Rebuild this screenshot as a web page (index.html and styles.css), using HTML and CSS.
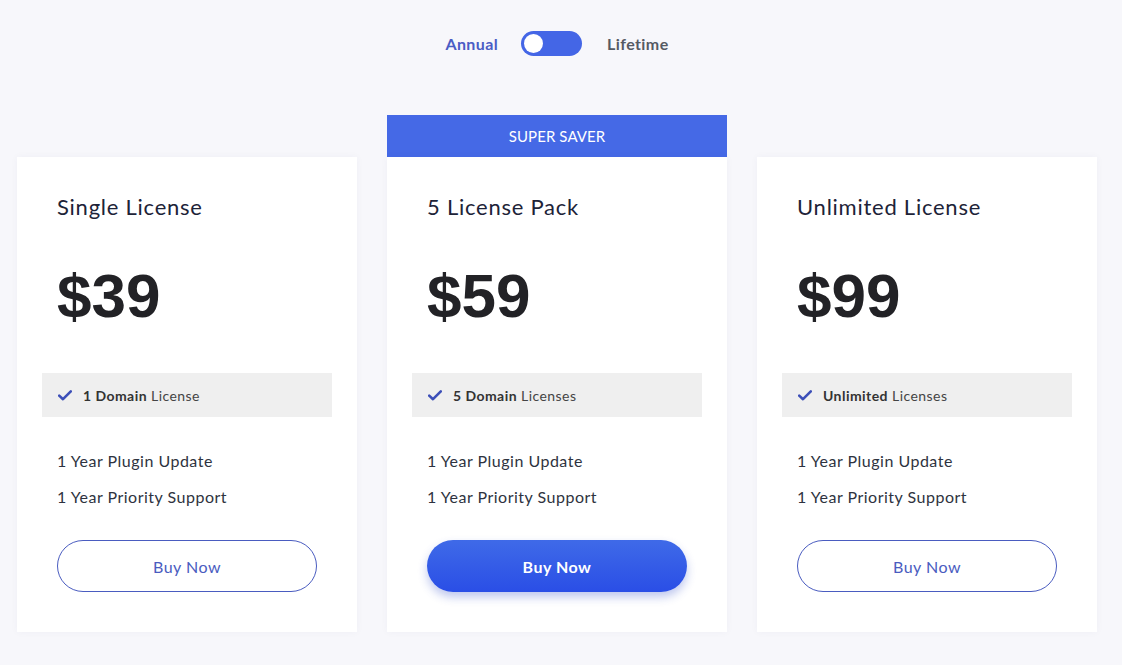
FILE: index.html
```html
<!DOCTYPE html>
<html lang="en">
<head>
<meta charset="utf-8">
<title>Pricing</title>
<link rel="stylesheet" href="styles.css">
</head>
<body>
<div class="page">
  <div class="switcher">
    <span class="sw-label sw-active">Annual</span>
    <span class="toggle"><span class="knob"></span></span>
    <span class="sw-label">Lifetime</span>
  </div>
  <div class="plans">
    <div class="plan-col">
      <div class="card">
        <h2 class="title">Single License</h2>
        <div class="price">$39</div>
        <div class="highlight">
          <svg class="check" viewBox="0 0 14 11" width="14" height="11"><path d="M1.2 5.6 L5 9.2 L12.8 1.4" fill="none" stroke="#3c4fb8" stroke-width="2.6" stroke-linecap="round" stroke-linejoin="round"/></svg>
          <span><b>1 Domain</b> License</span>
        </div>
        <ul class="features">
          <li>1 Year Plugin Update</li>
          <li>1 Year Priority Support</li>
        </ul>
        <a class="btn btn-outline" href="#">Buy Now</a>
      </div>
    </div>
    <div class="plan-col">
      <div class="banner">SUPER SAVER</div>
      <div class="card">
        <h2 class="title">5 License Pack</h2>
        <div class="price">$59</div>
        <div class="highlight">
          <svg class="check" viewBox="0 0 14 11" width="14" height="11"><path d="M1.2 5.6 L5 9.2 L12.8 1.4" fill="none" stroke="#3c4fb8" stroke-width="2.6" stroke-linecap="round" stroke-linejoin="round"/></svg>
          <span><b>5 Domain</b> Licenses</span>
        </div>
        <ul class="features">
          <li>1 Year Plugin Update</li>
          <li>1 Year Priority Support</li>
        </ul>
        <a class="btn btn-solid" href="#">Buy Now</a>
      </div>
    </div>
    <div class="plan-col">
      <div class="card">
        <h2 class="title">Unlimited License</h2>
        <div class="price">$99</div>
        <div class="highlight">
          <svg class="check" viewBox="0 0 14 11" width="14" height="11"><path d="M1.2 5.6 L5 9.2 L12.8 1.4" fill="none" stroke="#3c4fb8" stroke-width="2.6" stroke-linecap="round" stroke-linejoin="round"/></svg>
          <span><b>Unlimited</b> Licenses</span>
        </div>
        <ul class="features">
          <li>1 Year Plugin Update</li>
          <li>1 Year Priority Support</li>
        </ul>
        <a class="btn btn-outline" href="#">Buy Now</a>
      </div>
    </div>
  </div>
</div>
</body>
</html>
```
FILE: styles.css
```css
* { box-sizing: border-box; }
html, body { margin: 0; padding: 0; }
body {
  background: #f7f7fb;
  font-family: "Lato", "Open Sans", sans-serif;
  color: #2b2f3a;
  width: 1122px;
  height: 665px;
  overflow: hidden;
}
.page { padding: 31px 25px 0 17px; }
.switcher {
  display: flex;
  align-items: center;
  justify-content: center;
  height: 25px;
  margin-bottom: 59px;
}
.sw-label {
  font-size: 16px;
  font-weight: 700;
  letter-spacing: 0.4px;
  color: #555a63;
}
.sw-active { color: #4a5cc5; }
.toggle {
  width: 61px;
  height: 25px;
  border-radius: 13px;
  background: #4466e6;
  margin: 0 25px 0 23px;
  padding: 3px;
  display: flex;
}
.knob {
  width: 19px;
  height: 19px;
  border-radius: 50%;
  background: #fff;
}
.plans {
  display: flex;
  align-items: flex-end;
  gap: 30px;
}
.plan-col { width: 340px; display: flex; flex-direction: column; }
.banner {
  height: 42px;
  background: #4569e6;
  color: #fff;
  font-size: 15px;
  display: flex;
  align-items: center;
  justify-content: center;
  letter-spacing: 0.1px;
}
.card {
  background: #fff;
  height: 475px;
  padding: 37px 40px 40px;
  box-shadow: 0 0 8px rgba(40, 40, 90, 0.04);
}
.title {
  margin: 0;
  font-size: 22px;
  line-height: 26px;
  font-weight: 400;
  color: #1d2338;
  letter-spacing: 0.75px;
}
.price {
  margin-top: 36px;
  height: 80px;
  line-height: 80px;
  font-family: "Liberation Sans", Arial, sans-serif;
  font-size: 62px;
  font-weight: 700;
  color: #222226;
}
.highlight {
  margin: 37px -15px 0;
  height: 44px;
  background: #efefef;
  display: flex;
  align-items: center;
  padding-left: 16px;
  gap: 11px;
  font-size: 14px;
  letter-spacing: 0.45px;
  color: #444;
}
.highlight b { color: #333; font-weight: 700; }
.check { flex: none; }
.features {
  list-style: none;
  margin: 26px 0 0;
  padding: 0;
}
.features li {
  line-height: 36px;
  font-size: 16px;
  letter-spacing: 0.5px;
  color: #2e3340;
}
.btn {
  display: flex;
  align-items: center;
  justify-content: center;
  margin-top: 25px;
  width: 260px;
  height: 52px;
  border-radius: 26px;
  font-size: 16px;
  letter-spacing: 0.5px;
  text-decoration: none;
}
.btn-outline {
  border: 1px solid #4a5cc0;
  color: #4a5cc0;
}
.btn-solid {
  background: linear-gradient(180deg, #3f6ae8 0%, #2a4ee6 100%);
  color: #fff;
  font-weight: 700;
  box-shadow: 0 5px 10px rgba(40, 70, 200, 0.3);
}
```
